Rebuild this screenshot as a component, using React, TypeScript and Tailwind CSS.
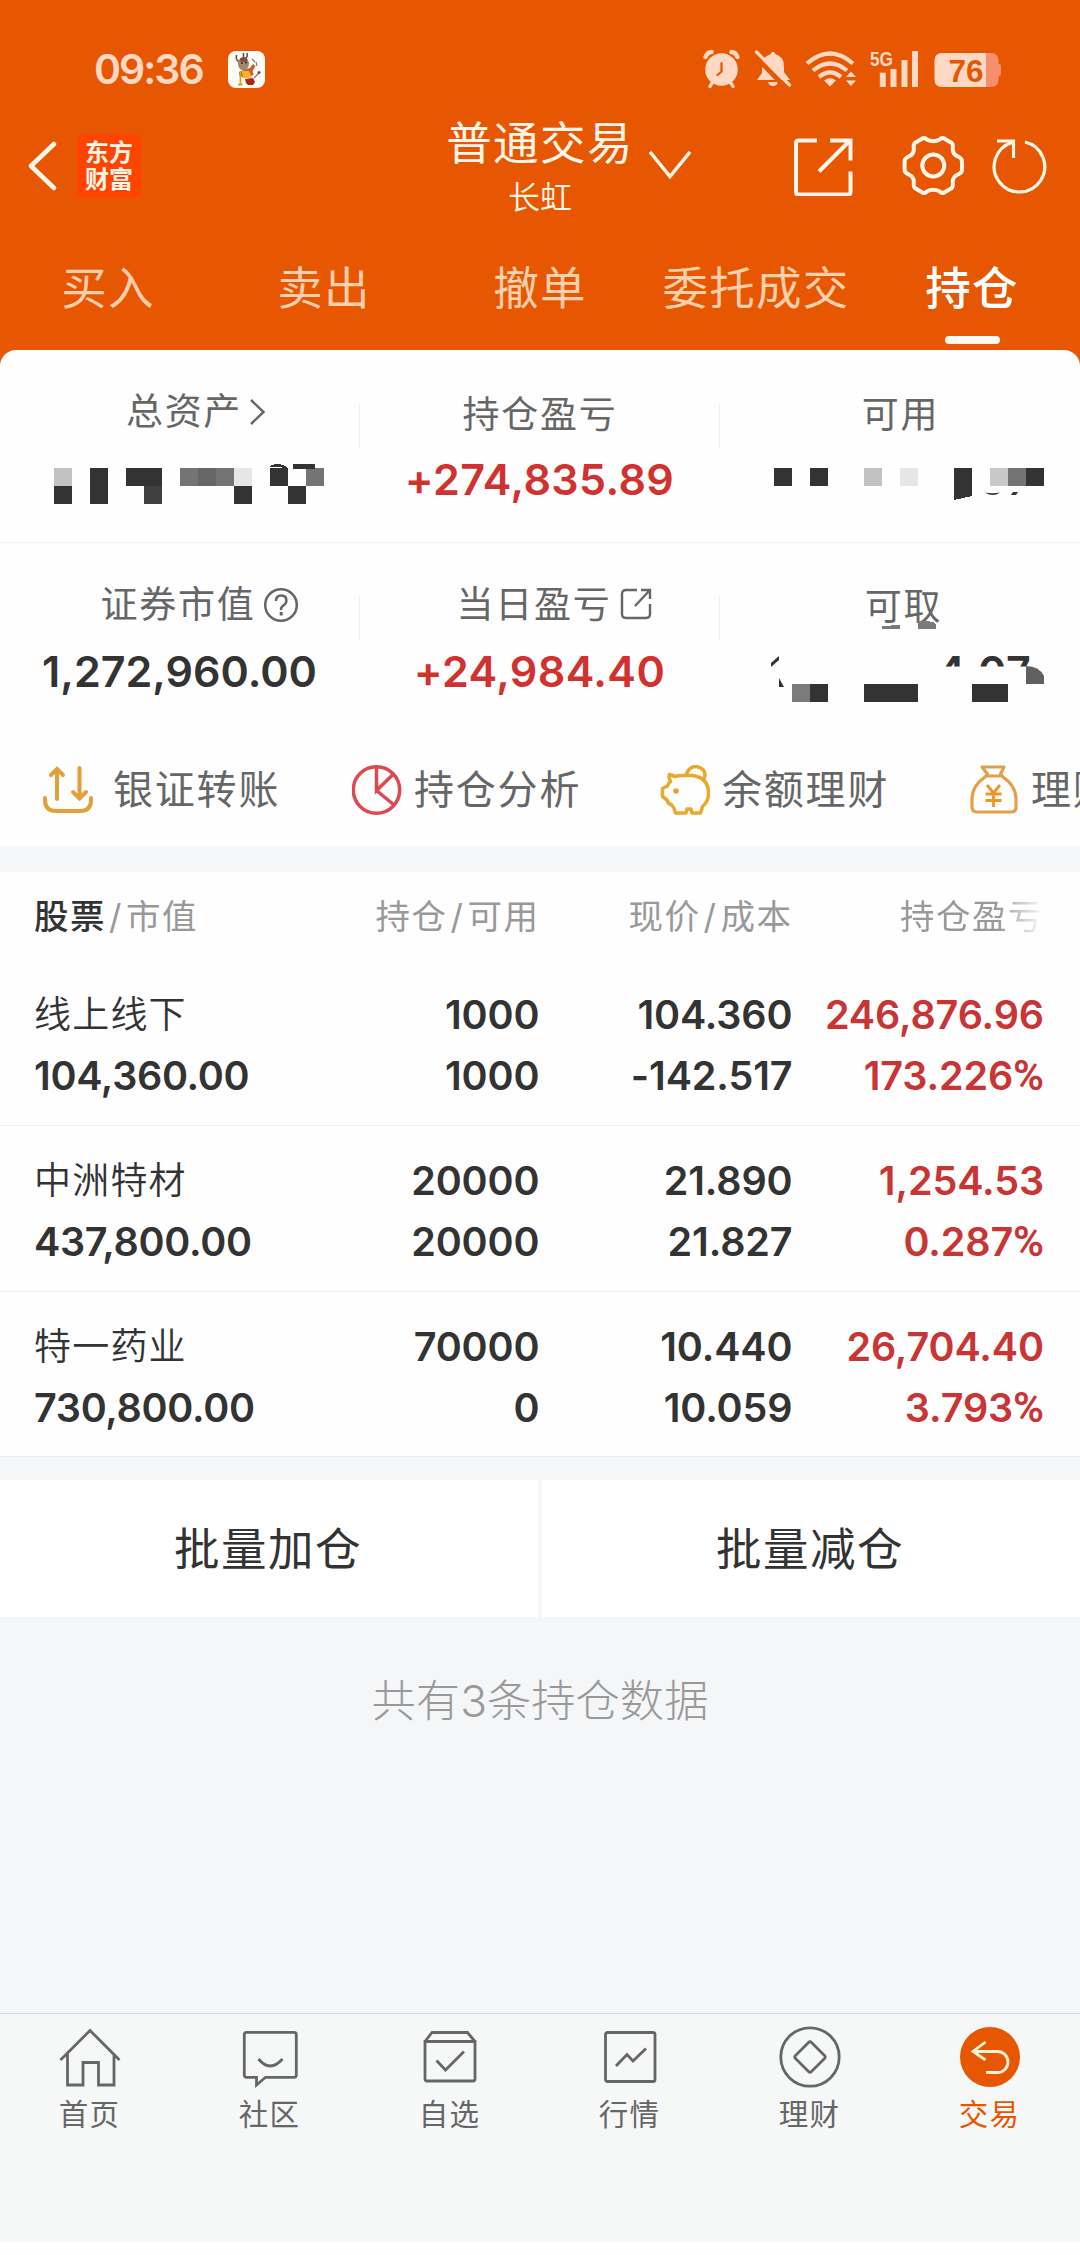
import React from "react"

type Holding = {
    name: string
    value: string
    amount: string
    available: string
    price: string
    cost: string
    profit: string
    rate: number
}

const holdings: Holding[] = [
    { name: "线上线下", value: "104,360.00", amount: "1000", available: "1000", price: "104.360", cost: "-142.517", profit: "246,876.96", rate: 173.226 },
    { name: "中洲特材", value: "437,800.00", amount: "20000", available: "20000", price: "21.890", cost: "21.827", profit: "1,254.53", rate: 0.287 },
    { name: "特一药业", value: "730,800.00", amount: "70000", available: "0", price: "10.440", cost: "10.059", profit: "26,704.40", rate: 3.793 },
]

const tabs: string[] = ["买入", "卖出", "撤单", "委托成交", "持仓"]

//^ STATUS BAR ============================================================================================================
const MascotIcon = () => (
    <svg className="ml-[25px] h-[37px] w-[37px]" viewBox="0 0 37 37">
        <rect width="37" height="37" rx="8" fill="#fffdf8" />
        <path d="M8.500 4c-1 4 1 7 4 7M19 2c1 3 0 5-3 7M15.500 2v5" stroke="#6b5348" strokeWidth="1.600" fill="none" />
        <ellipse cx="15.500" cy="13" rx="5.500" ry="6.500" fill="#a08572" />
        <path d="M11.500 8q4-4 8 0l-1 2.500h-6z" fill="#8a4a30" />
        <circle cx="14" cy="12" r=".900" fill="#222" />
        <circle cx="18" cy="11.500" r=".900" fill="#222" />
        <path d="M11 21l5-2 6-2 3-4 2.500 2-3 5 1 4-9 3-5-2z" fill="#cf5a26" />
        <path d="M14 20l7 0 3 6.500-9 1z" fill="#f0b92c" />
        <path d="M17 28l8-1 2 4-2 3h-5l-2-2z" fill="#a8261a" />
        <path d="M12.500 20v13M10 33.500h4.500" stroke="#d8a12a" strokeWidth="1.800" />
        <path d="M26 27l5-5M24 8l3 3M28 11l1 4" stroke="#777" strokeWidth="1.100" />
        <circle cx="31" cy="21.500" r="1.500" fill="#555" />
    </svg>
)

const StatusIcons = () => (
    <svg className="ml-auto h-[60px] w-[300px]" viewBox="702 39 300 60" fill="#ffd9c4">
        {/* alarm */}
        <circle cx="721.500" cy="69.500" r="16.300" />
        <path d="M705.500 57q2-5 6-5M737.500 57q-2-5-6-5" stroke="#ffd9c4" strokeWidth="4.500" fill="none" strokeLinecap="round" />
        <path d="M712 83l-2 3.500M731 83l2 3.500" stroke="#ffd9c4" strokeWidth="3.500" strokeLinecap="round" />
        <path d="M721.500 63v8.500l-4 3.500" stroke="#e75600" strokeWidth="2.200" fill="none" strokeLinecap="round" />
        {/* bell off */}
        <path d="M773 52q2 0 2.500 2.300q8.500 2.700 8.500 11.700v6l6 8h-33l5-7v-8q0-8 8.500-10.700q.5-2.300 2.500-2.300z" />
        <path d="M768 82h10q-1 4-5 4t-5-4z" />
        <path d="M754 55l32 33" stroke="#e75600" strokeWidth="5" />
        <path d="M756.500 52l33 33" stroke="#ffd9c4" strokeWidth="3.200" strokeLinecap="round" />
        {/* wifi */}
        <g fill="none" stroke="#ffd9c4" strokeWidth="4.200">
            <path d="M807 63.500q23-20 46 0" />
            <path d="M813 70.500q17-14 34 0" />
            <path d="M819 77q11-9 22 0" />
        </g>
        <path d="M824 80.500q6-4.500 12 0l-6 6z" />
        <path d="M846 77l5-5.500 5 5.500zM846 80.500l5 5.500 5-5.500z" />
        {/* signal */}
        <text x="870" y="65.500" fontSize="21" fontWeight="700" textLength="23" lengthAdjust="spacingAndGlyphs" fontFamily="Liberation Sans">5G</text>
        <rect x="879.800" y="72.700" width="6" height="14.300" />
        <rect x="890.500" y="69" width="6" height="18" />
        <rect x="901.500" y="60" width="6" height="27" />
        <rect x="912" y="51" width="6" height="36" />
        {/* battery */}
        <path d="M942 53h44v34h-44q-7.500 0-7.500-7.500v-19q0-7.500 7.500-7.500z" />
        <path d="M986 53h5q7.500 0 7.500 7.500v3.500h1q1.500 0 1.500 2v8q0 2-1.500 2h-1v3.500q0 7.500-7.500 7.500h-5z" fill="#f58f6e" />
        <text x="948.500" y="82" fontSize="32" fontWeight="700" textLength="35" lengthAdjust="spacingAndGlyphs" fill="#e75600" fontFamily="Liberation Sans">76</text>
    </svg>
)

//^ HEADER ================================================================================================================
const Header = () => (
    <header className="h-[350px] text-[#fff6ea]">
        <div className="flex h-[106px] items-center pt-[32px] pr-[78px] pl-[94px]">
            <span className="text-[41px] leading-none font-semibold tracking-[-2px] text-[#ffd9c4]">09:36</span>
            <MascotIcon />
            <StatusIcons />
        </div>

        <div className="flex h-[119px] items-center pr-[33px] pl-[28px]">
            <svg className="h-[50px] w-[29px]" viewBox="0 0 29 50" fill="none" stroke="currentColor" strokeWidth="4.500" strokeLinecap="round" strokeLinejoin="round">
                <path d="M26 3L3 25l23 22" />
            </svg>
            <div className="ml-[20px] flex h-[64px] w-[64px] flex-col items-center justify-center rounded-[6px] bg-[#ff4300] text-[24px] leading-[27px] font-bold">
                <span>东方</span>
                <span>财富</span>
            </div>
            <div className="ml-[305px] flex w-[188px] flex-col items-center pt-[3px]">
                <h1 className="text-[45.500px] leading-[50px] tracking-[1.400px] whitespace-nowrap">普通交易</h1>
                <p className="mt-[11px] text-[32px] leading-[36px] font-[350]">长虹</p>
            </div>
            <svg className="ml-[14px] h-[30px] w-[44px]" viewBox="648 145 44 30" fill="none" stroke="currentColor" strokeWidth="3.500">
                <path d="M650 146l20 24.500 20-24.500" />
            </svg>
            <svg className="ml-auto h-[60px] w-[256px]" viewBox="791 135.500 256 60" fill="none" stroke="currentColor" strokeWidth="4">
                <path d="M817 140h-18.500q-2.500 0-2.500 2.500v49q0 2.500 2.500 2.500h50q2 0 2-2.500v-20.500" />
                <path d="M830 140h20.500v20M849 141l-30 30" />
                <g transform="translate(933.300 165)" strokeLinejoin="round">
                    <path d="M28.500-5.500Q29 0 28.500 5.500Q28 7.500 24.500 9Q19 11.500 19.500 17Q20 21 18.500 22.500L10.500 27.300Q8 28 6.500 26Q0 22.500-6.500 26Q-8 28-10.500 27.300L-18.500 22.500Q-20 21-19.500 17Q-19 11.500-24.500 9Q-28 7.500-28.500 5.500Q-29 0-28.500-5.500Q-28-7.500-24.500-9Q-19-11.500-19.500-17Q-20-21-18.500-22.500L-10.500-27.300Q-8-28-6.500-26Q0-22.500 6.500-26Q8-28 10.500-27.300L18.500-22.500Q20-21 19.500-17Q19-11.500 24.500-9Q28-7.500 28.500-5.500Z" />
                    <circle r="11" />
                </g>
                <g strokeWidth="3.200">
                    <path d="M1025 141.500A25.300 25.300 0 1 1 1012 142" />
                    <path d="M997 140.500h16.500v17" />
                </g>
            </svg>
        </div>

        <nav className="grid grid-cols-5 pt-[39px]">
            {tabs.map((tab) => (
                <div key={tab} className="flex flex-col items-center">
                    <span className={tab === "持仓" ? "text-[45.500px] leading-[50px] font-medium tracking-[1.200px] text-white" : "text-[45.500px] leading-[50px] tracking-[1.200px] text-[#ffcfae]"}>
                        {tab}
                    </span>
                    {tab === "持仓" && <i className="mt-[22px] h-[8px] w-[55px] rounded-full bg-[#fff8ee]" />}
                </div>
            ))}
        </nav>
    </header>
)

//^ SUMMARY ===============================================================================================================
type StatProps = {
    label: string
    className?: string
    icon?: React.ReactNode
    children: React.ReactNode
}

const Stat = ({ label, className = "", icon, children }: StatProps) => (
    <div className="flex w-[359px] flex-col items-center">
        <div className={`flex h-[48px] items-center text-[37px] leading-[48px] tracking-[1.700px] text-[#666] ${className}`}>
            {label}
            {icon}
        </div>
        <div className="mt-[17px] h-[50px]">{children}</div>
    </div>
)

const StatValue = ({ red, children }: { red?: boolean, children: string }) => (
    <span className={red ? "text-[43px] leading-[50px] font-semibold tracking-[0.400px] text-[#d03230]" : "text-[43px] leading-[50px] font-semibold text-[#333]"}>
        {children}
    </span>
)

const VLine = () => <i className="mt-[15px] h-[45px] w-px bg-[#eee]" />

// hidden amounts, drawn as a grid of 18px blocks
const HiddenTotal = () => (
    <svg className="h-[50px] w-[359px] overflow-visible" viewBox="0 454 359 50" shapeRendering="crispEdges" fill="#333">
        <rect x="54" y="468" width="18" height="18" fill="#c2c2c2" />
        <rect x="54" y="486" width="18" height="18" />
        <rect x="90" y="468" width="18" height="36" />
        <rect x="126" y="468" width="36" height="18" />
        <rect x="144" y="486" width="18" height="18" fill="#404040" />
        <rect x="180" y="468" width="54" height="18" fill="#747474" />
        <rect x="198" y="468" width="18" height="18" fill="#666" />
        <rect x="234" y="468" width="18" height="18" fill="#e6e6e6" />
        <rect x="234" y="486" width="18" height="18" />
        <rect x="270" y="468" width="18" height="18" />
        <rect x="288" y="486" width="18" height="18" />
        <rect x="306" y="468" width="18" height="18" fill="#747474" />
        <path d="M270 466q8-4 15 0l3 2h-4q-6-2-14-1z" />
        <rect x="293" y="464" width="22" height="4.500" />
    </svg>
)

const HiddenAvailable = () => (
    <svg className="h-[50px] w-[359px] overflow-visible" viewBox="720 454 359 50" shapeRendering="crispEdges" fill="#333">
        <rect x="774" y="468" width="18" height="18" />
        <rect x="810" y="468" width="18" height="18" />
        <rect x="864" y="468" width="18" height="18" fill="#c2c2c2" />
        <rect x="900" y="468" width="18" height="18" fill="#e6e6e6" />
        <path d="M954 468h18v28l-18 4z" />
        <rect x="990" y="468" width="18" height="18" fill="#c8c8c8" />
        <rect x="1008" y="468" width="18" height="18" fill="#747474" />
        <rect x="1026" y="468" width="18" height="18" />
        <path d="M985 492.500q7 1.500 15 0q-7 5-15 0zM1013 492h5l-2 3h-5z" shapeRendering="auto" />
    </svg>
)

const HiddenWithdraw = () => (
    <svg className="h-[50px] w-[359px] overflow-visible" viewBox="720 646 359 50" shapeRendering="crispEdges" fill="#333">
        <clipPath id="amountTop"><rect x="940" y="650" width="92" height="16.500" /></clipPath>
        <g fontSize="43" fontWeight="600" clipPath="url(#amountTop)">
            <text x="937" y="687">4</text>
            <text x="978" y="687">0</text>
            <text x="1006" y="687">7</text>
        </g>
        <path d="M882 626l18-1v4h-18zM918 621h10q6 1 8 3v5h-18z" fill="#7b7b7b" />
        <path d="M771 663l8-7v4l-8 7zM779 678l5 9h-5z" shapeRendering="auto" />
        <rect x="792" y="684" width="18" height="18" fill="#7b7b7b" />
        <rect x="810" y="684" width="18" height="18" />
        <rect x="864" y="684" width="54" height="18" />
        <rect x="972" y="684" width="36" height="18" />
        <path d="M1026 666q13 0 18 10v8h-18z" fill="#606060" shapeRendering="auto" />
    </svg>
)

const Summary = () => (
    <section className="h-[496px] rounded-t-[16px] bg-[#fefefe]">
        <div className="flex h-[193px] border-b border-[#f1f1f1] pt-[39px]">
            <Stat
                label="总资产"
                className="pb-[3px] pl-[34px]"
                icon={
                    <svg className="ml-[7px] h-[28px] w-[18px]" viewBox="0 0 18 28" fill="none" stroke="currentColor" strokeWidth="2.500">
                        <path d="M2 2l12.500 12L2 26" />
                    </svg>
                }
            >
                <HiddenTotal />
            </Stat>
            <VLine />
            <Stat label="持仓盈亏" className="pt-[3px] pl-px"><StatValue red>+274,835.89</StatValue></Stat>
            <VLine />
            <Stat label="可用" className="pt-[3px] pl-[2px]"><HiddenAvailable /></Stat>
        </div>

        <div className="flex h-[187px] pt-[38px]">
            <Stat
                label="证券市值"
                className="pl-[41px]"
                icon={
                    <svg className="ml-[8px] h-[36px] w-[36px]" viewBox="0 0 36 36" fill="none" stroke="currentColor" strokeWidth="2.500">
                        <circle cx="18" cy="18" r="15.800" />
                        <path d="M13 14q0-5.500 5.200-5.500t5.200 5q0 3-3 5t-2.200 4.500" />
                        <path d="M18.200 25v3.500" strokeWidth="3" />
                    </svg>
                }
            >
                <StatValue>1,272,960.00</StatValue>
            </Stat>
            <VLine />
            <Stat
                label="当日盈亏"
                className="pl-[31px]"
                icon={
                    <svg className="ml-[8px] h-[34px] w-[34px]" viewBox="0 0 34 34" fill="none" stroke="currentColor" strokeWidth="2.400">
                        <path d="M18 2H7Q3 2 3 6v20q0 4 4 4h20q4 0 4-4V16" />
                        <path d="M22 2h9v9M31 2L16 18" />
                    </svg>
                }
            >
                <StatValue red>+24,984.40</StatValue>
            </Stat>
            <VLine />
            <Stat label="可取" className="pt-[4px] pl-[8px]"><HiddenWithdraw /></Stat>
        </div>

        <div className="flex h-[116px] items-center overflow-hidden pt-[3px] pl-[43px] text-[40px] leading-[50px] tracking-[1.800px] whitespace-nowrap text-[#666]">
            <div className="flex w-[309px] shrink-0 items-center gap-[20px]">
                <svg className="h-[50px] w-[50px]" viewBox="43 764 50 50" fill="none" stroke="#e3a03a" strokeWidth="4" strokeLinecap="round">
                    <path d="M57 798v-30M51 774l6-6 6 6M79.500 767v30M73 791l6.500 6.500 6.500-6.500" />
                    <path d="M45 797v2q0 11 11 11h24q11 0 11-11v-2" />
                </svg>
                银证转账
            </div>
            <div className="flex w-[308px] shrink-0 items-center gap-[12px]">
                <svg className="h-[50px] w-[50px]" viewBox="352 764 50 50" fill="none" stroke="#da4a50" strokeWidth="3.500">
                    <circle cx="376.500" cy="789" r="23.200" />
                    <path d="M376.500 766v23.500l16.500-16M376.500 789.500l17 14" />
                </svg>
                持仓分析
            </div>
            <div className="flex w-[309px] shrink-0 items-center gap-[12px]">
                <svg className="h-[50px] w-[50px]" viewBox="660 764 50 50" fill="none" stroke="#e9a92c" strokeWidth="3.500" strokeLinejoin="round">
                    <path d="M669.500 773.500q3 .5 5 2q4-1 9-1h9q16 2 16 18q0 8-6 13l-2 6.500h-8.500l-1-4h-4l-1 4h-10.500q-1-5-3.500-8q-4-1-5-5l-4.500-3.500v-8l5-2.500q1-3 3-4.500q-2-4-1-7z" />
                    <path d="M686 774q3-8.500 10-8.500q9 1.500 9 9l-2 6" />
                    <circle cx="676" cy="790" r="2.800" fill="#e3a03a" stroke="none" />
                </svg>
                余额理财
            </div>
            <div className="flex shrink-0 items-center gap-[12px]">
                <svg className="h-[50px] w-[50px]" viewBox="969 764 50 50" fill="none" stroke="#e3a04a" strokeWidth="3.200" strokeLinejoin="round">
                    <path d="M982 766h22l-3.500 7 2.500 3q13 9 13 22v8q0 5-5 5h-34q-5 0-5-5v-8q0-13 13-22l2.500-3zM986 775h15" />
                    <path d="M987 784l6.500 8 6.500-8M993.500 792v14M985.500 793h16M985.500 799.500h16" stroke="#e9962c" strokeWidth="2.800" />
                </svg>
                理财
            </div>
        </div>
    </section>
)

//^ HOLDINGS ==============================================================================================================
const cols = "grid grid-cols-[300px_205.500px_253px_251.500px] pl-[34px] whitespace-nowrap"

const HoldingsTable = () => (
    <section className="mt-[26px] bg-[#fefefe]">
        <div className={`${cols} h-[88px] items-center pt-[2px] text-[34.500px] tracking-[1.500px] text-[#999]`}>
            <span><b className="font-medium text-[#333]">股票</b><span className="mx-[3px]">/</span>市值</span>
            <span className="text-right">持仓<span className="mx-[3px]">/</span>可用</span>
            <span className="text-right">现价<span className="mx-[3px]">/</span>成本</span>
            <span className="text-right [mask-image:linear-gradient(90deg,#000_82%,transparent_100%)]">持仓盈亏</span>
        </div>
        {holdings.map((item) => (
            <div key={item.name} className={`${cols} h-[166px] border-b border-[#efefef] pt-[25px] text-[39.500px] leading-[60.500px] font-semibold tracking-[-0.100px] text-[#333] last:h-[165px]`}>
                <div>
                    <p className="text-[37px] font-[350] tracking-[1.200px]">{item.name}</p>
                    <p className="tracking-[-0.300px]">{item.value}</p>
                </div>
                <div className="text-right">
                    <p>{item.amount}</p>
                    <p>{item.available}</p>
                </div>
                <div className="text-right">
                    <p>{item.price}</p>
                    <p>{item.cost}</p>
                </div>
                <div className="text-right text-[#c93434]">
                    <p>{item.profit}</p>
                    <p>{item.rate}<span className="font-[Roboto] text-[42px]">%</span></p>
                </div>
            </div>
        ))}
    </section>
)

//^ BOTTOM NAV ============================================================================================================
type NavItem = {
    label: string
    icon: React.ReactNode
}

const navItems: NavItem[] = [
    { label: "首页", icon: <path d="M2.500 35L32 5.500 61.500 35M9.500 29v31H25V37.500h15.500V60H56V29" /> },
    { label: "社区", icon: <><path d="M8.500 7.300h47.500q2.300 0 2.300 2.300V50q0 2.300-2.300 2.300H27.500L18.500 60v-7.700h-10Q6.300 52.300 6.300 50V9.600q0-2.300 2.200-2.300z" /><path d="M20.500 34q11.500 14 24 0" /></> },
    { label: "自选", icon: <><path d="M7 16.500h50V54q0 2-2 2H9q-2 0-2-2zl7-9h35.500l7.500 9" /><path d="M18.500 35.500l9 9.500L46 26.500" /></> },
    { label: "行情", icon: <><rect x="7.500" y="7.500" width="49.500" height="49" rx="2" /><path d="M18 41l11-11.500 6 6.500 13-12.500" /></> },
    { label: "理财", icon: <><circle cx="32" cy="32" r="29.200" /><path d="M30.500 17.500q1.500-1.500 3 0l13 13q1.500 1.500 0 3l-13 13q-1.500 1.500-3 0l-13-13q-1.500-1.500 0-3z" /></> },
    { label: "交易", icon: <><circle cx="32" cy="32" r="30" fill="#e75600" stroke="none" /><path d="M27.500 17L15 26.500l12.500 8.500M15 26.500h24.500a10.500 10.500 0 0 1 0 21H28" stroke="#fff1dc" /></> },
]

const BottomNav = () => (
    <nav className="grid h-[229px] grid-cols-6 border-t border-[#d3d6d9] bg-[#f6f8f8] pt-[11px]">
        {navItems.map((item) => (
            <div key={item.label} className={item.label === "交易" ? "flex flex-col items-center text-[#e75600]" : "flex flex-col items-center text-[#666]"}>
                <svg className="h-[64px] w-[64px]" viewBox="0 0 64 64" fill="none" stroke="currentColor" strokeWidth="2.800">
                    {item.icon}
                </svg>
                <span className="mt-[7px] pr-px text-[29.500px] leading-[36px] tracking-[1.200px]">{item.label}</span>
            </div>
        ))}
    </nav>
)

//^ APP ===================================================================================================================
const App = (): React.ReactNode => {
    return (
        <div className="flex h-[2255px] w-[1080px] flex-col overflow-hidden bg-[#f5f6f8] font-[Inter,'Noto_Sans_CJK_SC',sans-serif]">
            <div className="bg-[#e75600]">
                <Header />
                <Summary />
            </div>
            <HoldingsTable />
            <div className="mt-[23px] flex h-[137px] gap-[4px] text-[45.500px] tracking-[1.500px] text-[#333]">
                <button className="flex-1 bg-white pt-[3px] pr-[2px]">批量加仓</button>
                <button className="flex-1 bg-white pt-[3px] pr-[2px]">批量减仓</button>
            </div>
            <p className="flex-1 pt-[59px] text-center text-[44.300px] leading-[50px] font-light text-[#999]">共有3条持仓数据</p>
            <BottomNav />
            <div className="h-[13px] bg-[#fefefe]" />
        </div>
    )
}
export default App
